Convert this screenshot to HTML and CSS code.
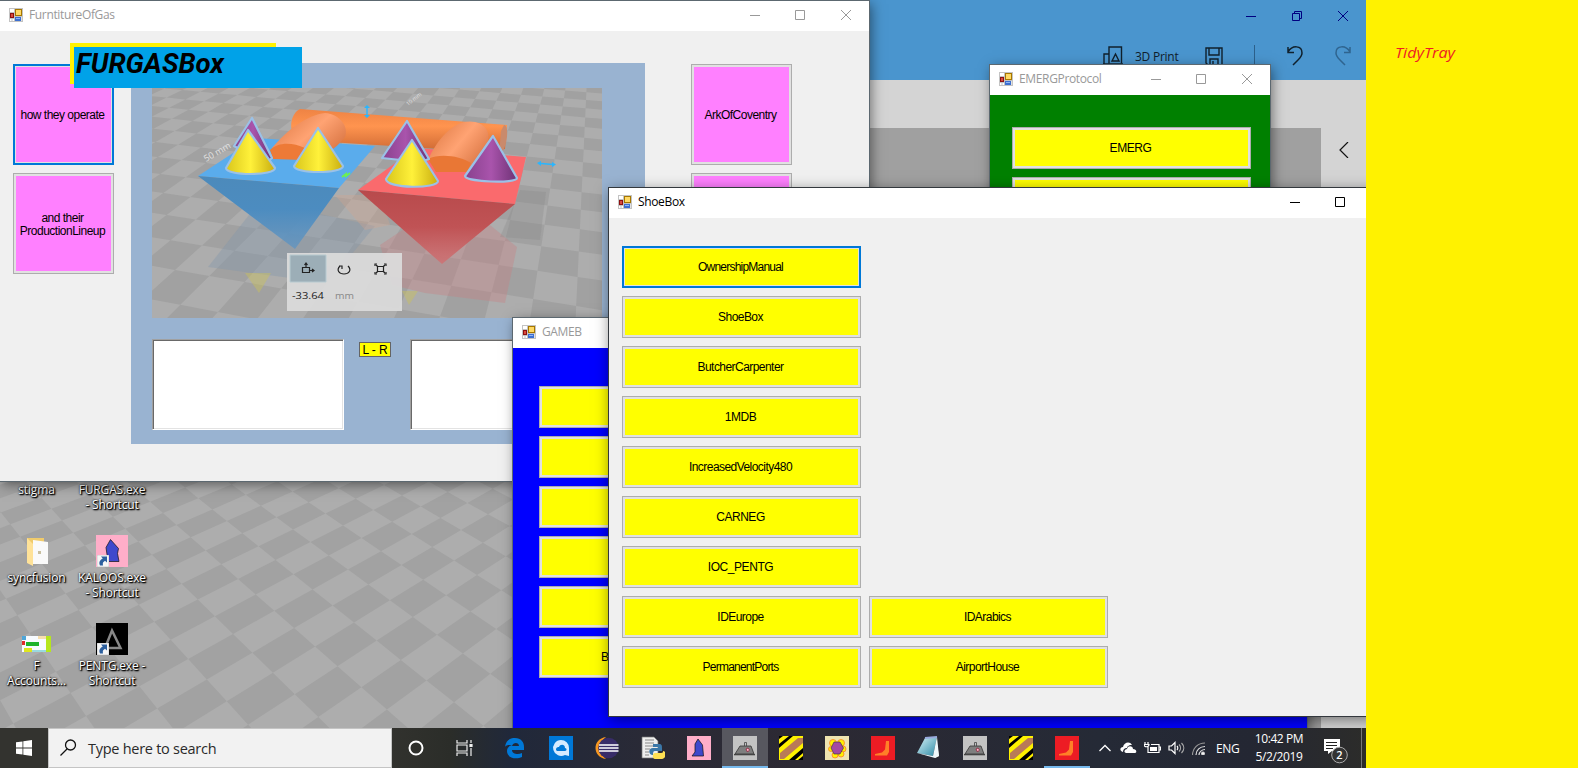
FILE: index.html
```html
<!DOCTYPE html>
<html lang="en">
<head>
<meta charset="utf-8">
<title>Desktop</title>
<link rel="stylesheet" href="styles.css">
</head>
<body>
<svg class="defs" width="0" height="0">
  <defs>
    <linearGradient id="gy" x2="1"><stop offset="0" stop-color="#d9c61c"/><stop offset=".5" stop-color="#fff13a"/><stop offset="1" stop-color="#c9ae10"/></linearGradient>
    <linearGradient id="gp" x2="1"><stop offset="0" stop-color="#88418d"/><stop offset=".5" stop-color="#a954ac"/><stop offset="1" stop-color="#6e3275"/></linearGradient>
    <linearGradient id="go" x1="0" y1="0" x2="0" y2="1"><stop offset="0" stop-color="#ee8344"/><stop offset=".4" stop-color="#ff944f"/><stop offset="1" stop-color="#cc6833"/></linearGradient>
    <linearGradient id="go2" x1="0" y1="0" x2="1" y2=".7"><stop offset="0" stop-color="#d9733d"/><stop offset=".55" stop-color="#ffa373"/><stop offset="1" stop-color="#d87442"/></linearGradient>
    <linearGradient id="gb" x2="0" y2="1"><stop offset="0" stop-color="#4c8abb"/><stop offset=".45" stop-color="#4c8cc0"/><stop offset="1" stop-color="#5f94c2" stop-opacity=".75"/></linearGradient>
    <linearGradient id="gr" x2="0" y2="1"><stop offset="0" stop-color="#b84a4c"/><stop offset=".5" stop-color="#c05355"/><stop offset="1" stop-color="#cf7274" stop-opacity=".85"/></linearGradient>
    <linearGradient id="note" x2="1" y2="1"><stop offset="0" stop-color="#d9f3f8"/><stop offset="1" stop-color="#2c8ba6"/></linearGradient>
    <symbol id="form" viewBox="0 0 14 14">
      <path fill="#c3c3c3" d="M0 0h14v14H0z"/><path fill="#fff" d="M1 1h4v3H1zM1 11h1.500v2H1zM3.500 11H5v2H3.500zM12.500 9H13v4h-.5z"/>
      <path fill="#8d1010" d="M1 5h4v5H1z"/><path fill="#d94a3c" d="M2 6h2v3H2z"/>
      <path fill="#a67700" d="M6 1h7v7H6z"/><path fill="#ffd964" d="M7 2h5v5H7z"/>
      <path fill="#3c6fd1" d="M6 9h6v4H6z"/><path fill="#91b5f5" d="M7 10h4v1H7z"/>
    </symbol>
    <symbol id="min" viewBox="0 0 10 10"><path d="M0 5.500h10" stroke="currentColor"/></symbol>
    <symbol id="max" viewBox="0 0 10 10"><path d="M.5.5h9v9h-9z" fill="none" stroke="currentColor"/></symbol>
    <symbol id="close" viewBox="0 0 10 10"><path d="M0 0l10 10M10 0L0 10" stroke="currentColor"/></symbol>
    <symbol id="stripes" viewBox="0 0 24 24"><path fill="#fff200" d="M0 0h24v24H0z"/><path fill="#000" d="M0 8L10 0h4L0 12zM0 0h4L0 3zM24 12v5l-8 7h-6zM24 20v4h-5z"/><path fill="#b97a57" d="M19 2h5v5L5 23H1v-6z"/></symbol>
    <symbol id="truck" viewBox="0 0 24 24"><path fill="#c3c3c3" d="M0 0h24v24H0z"/><path fill="#7f7f7f" stroke="#333" stroke-width=".8" d="M2 18l5-8h11l3 8z"/><path fill="none" stroke="#444" stroke-width=".8" d="M11.500 10V6.500h2V10"/><path fill="#444" d="M1 18h21v1.300H1z"/><path fill="#ffc0d0" stroke="#8c1a35" stroke-width=".8" d="M13 13l2-1 1.500 2-2 2z"/></symbol>
    <symbol id="shoe" viewBox="0 0 24 24"><path fill="#ed1c24" d="M0 0h24v24H0z"/><path fill="#ff7f27" d="M15 5h3v11l-2 3.500H4V18l7-1.500 3-3z"/></symbol>
    <symbol id="kaloos" viewBox="0 0 24 24"><path fill="#ffaec9" d="M0 0h24v24H0z"/><path fill="#3f48cc" stroke="#111" stroke-width=".7" d="M11 3l4.500 6 1 11H5l3-4V8z"/></symbol>
    <symbol id="arrow" viewBox="0 0 12 12"><path fill="#f6f6f6" stroke="#aaa" stroke-width=".5" d="M0 0h12v12H0z"/><path fill="#2c5f9e" d="M4 1.500h6v6L8 5.800C6 7 5.500 8 6 10.500H3C1.500 7 3 5 5.800 3.500z"/></symbol>
  </defs>
</svg>

<main class="desktop">
  <svg class="floor" width="520" height="260" viewBox="0 470 520 260"><path id="desk-tiles" fill="#a2a2a2"/></svg>

  <section class="icons">
    <figure><i></i><figcaption>stigma</figcaption></figure>
    <figure><i></i><figcaption>FURGAS.exe<br>- Shortcut</figcaption></figure>
    <figure><i><svg width="32" height="32"><path fill="#f0cb6c" d="M6 3h17v25H12L6 25z"/><path fill="#fafafa" d="M12 5l15 2v22H12z"/><path fill="#ffe298" d="M6 3l6 6v22l-6-3z"/><path fill="#c8bf9f" d="M17 16h3v3h-3z"/></svg></i><figcaption>syncfusion</figcaption></figure>
    <figure><i><svg width="32" height="32"><path fill="#ffaec9" d="M0 0h32v32H0z"/><path fill="#3f48cc" stroke="#111" stroke-width=".7" d="M14.500 4.500l8 9-1 5 1.500 8H12l-1-7-1-7z"/><use href="#arrow" x="1" y="20" width="12" height="12"/></svg></i><figcaption>KALOOS.exe<br>- Shortcut</figcaption></figure>
    <figure><i><svg width="32" height="32"><path fill="#f7fbff" d="M1 13h29v16H1z"/><path fill="#b5e61d" d="M25 13h5v16h-5z"/><path fill="#f7dfae" d="M17 13h8v3h-8z"/><path fill="#1db32b" d="M5 19h13v4H5z"/><path fill="#e02b2b" d="M1 18h3v4H1z"/><path fill="#4fa6d8" d="M1 13h4v4H1z"/><path fill="#dfe61d" d="M3 25h8v4H3z"/><path fill="#9ad9df" d="M11 27h14v2H11z"/></svg></i><figcaption>F<br>Accounts...</figcaption></figure>
    <figure><i><svg width="32" height="32"><path d="M0 0h32v32H0z"/><path fill="none" stroke="#888" stroke-width="2.500" d="M16 7.500L24.500 25H9z"/><use href="#arrow" x="1" y="20" width="12" height="12"/></svg></i><figcaption>PENTG.exe -<br>Shortcut</figcaption></figure>
  </section>

  <section class="paint">
    <header>
      <div class="caption"><svg width="10" height="10"><use href="#min"/></svg><svg width="10" height="10" fill="none" stroke="currentColor"><path d="M.5 2.500h7v7h-7zM2.500 2.500v-2h7v7h-2"/></svg><svg width="10" height="10"><use href="#close"/></svg></div>
      <div class="tools">
        <svg width="20" height="20" fill="none" stroke="#10202c" stroke-width="1.400"><path d="M6 17.500V1h12.500v16.500M6 8H1v10M9 15l3.500-7 3.500 7z"/><path d="M0 18h20"/></svg>
        <span>3D Print</span>
        <svg width="18" height="19" fill="none" stroke="#10202c" stroke-width="1.400"><path d="M1 1h16v17H3l-2-2zM4 1v7h10V1M5 18v-6h8v6M8 14v4"/></svg>
        <b></b>
        <svg width="18" height="21" fill="none" stroke="#10202c" stroke-width="1.500"><path d="M2 2v5.500h6M2 7C6 0 16 0 16 8c0 3-2 5-4 7l-5 5"/></svg>
        <svg width="18" height="21" fill="none" stroke="#2f648f" stroke-width="1.500"><path d="M16 2v5.500h-6M16 7C12 0 2 0 2 8c0 3 2 5 4 7l5 5"/></svg>
      </div>
    </header>
    <div class="work"><div class="canvas"></div><svg width="10" height="16" fill="none" stroke="#111" stroke-width="1.200"><path d="M9 0L1 8l8 8"/></svg></div>
  </section>

  <section class="window furn">
    <header class="bar"><svg width="14" height="14"><use href="#form"/></svg><h1>FurntitureOfGas</h1><div class="caption"><svg width="10" height="10"><use href="#min"/></svg><svg width="10" height="10"><use href="#max"/></svg><svg width="10" height="10"><use href="#close"/></svg></div></header>
    <div class="content">
      <div class="col"><button class="btn pink focus">how they operate</button><button class="btn pink">and their<br>ProductionLineup</button></div>
      <div class="panel">
        <svg class="scene" width="450" height="230" viewBox="152 88 450 230">
          <path fill="#adadad" d="M152 88h450v230H152z"/><path id="scene-tiles" fill="#a1a1a1"/>
          <path fill="#7e95ad" opacity=".35" d="M208 267l52-66 115 25-42 51-35 2z"/>
          <path fill="#dba58c" opacity=".3" d="M335 195l45 0 10 30-25 5z"/>
          <path fill="#c98083" opacity=".38" d="M380 245l30-20h80l27 22-12 56-80-10-33-8z"/>
          <path fill="#888" opacity=".3" d="M520 190l26 2-6 48-40-3z"/>
          <path fill="#c9c25a" opacity=".45" d="M245 273h26l-12 20zM402 291h16l-9 14z"/>
          <path fill="#5aacec" d="M198 176l58-38 119 8-36 42z"/><path fill="url(#gb)" d="M198 176l141 12-44 61z"/>
          <path fill="#fa6a6d" d="M358 190l58-42 110 9-11 47z"/><path fill="url(#gr)" d="M358 190l157 14-73 60z"/>
          <path fill="url(#go)" d="M300 109l207 16-2 24-18 3-190-12c-10-10-6-27 3-31z"/>
          <path fill="#c98a6c" d="M504 125c6 0 3 26-5 30l2-24z"/>
          <path fill="url(#go2)" d="M272 148c15-18 35-33 53-35 15 1 24 14 20 24-10 13-22 20-41 23z"/><path fill="#ed7a37" d="M270 150c8-8 22-8 35-2l-2 12-30-1z"/>
          <path fill="url(#go2)" d="M428 160c10-23 28-42 47-38 13 3 17 14 10 26l-14 24z"/><path fill="#e97735" d="M428 159c12-6 32-3 43 4l-4 9-31 0z"/>
          <g stroke="#9bc1e7" stroke-width="2.200" stroke-linejoin="round">
            <path fill="url(#gp)" d="M252 118l20 40-7 6-31-18z"/><path fill="url(#gp)" d="M407 121l22 38-10 3-37-4z"/>
            <path fill="url(#gy)" d="M248 130l27 38c0 8-49 8-49 0z"/><path fill="url(#gy)" d="M318 128l25 38c0 8-49 8-49 0z"/>
            <path fill="url(#gy)" d="M412 140l26 41c0 8-52 8-52-2z"/><path fill="url(#gp)" d="M493 136l24 42c0 6-52 4-52-2z"/>
          </g>
          <g stroke="#29b6ff" stroke-width="1.400" fill="#29b6ff"><path d="M367 107v9"/><path stroke="none" d="M364 108l3-3 3 3zM364 115l3 3 3-3z"/><path d="M541 163.500l12 1"/><path stroke="none" d="M541 161v5l-4-3zM552 162v5l4-2.500z"/></g>
          <path stroke="#6df050" stroke-width="2" fill="none" d="M342 177l4-3 0 2 4-3"/>
          <text class="dim" transform="translate(206 162) rotate(-30) scale(.9)">50 mm</text><text class="dim" transform="translate(408 106) rotate(-38) scale(.55)">10 mm</text>
          <path fill="#dcdcdc" opacity=".93" d="M287 253h115v58H287z"/><path fill="#9caeb7" stroke="#b8cbd1" d="M290 255h36v27h-36z"/>
          <g fill="none" stroke="#222" stroke-width="1.200"><path d="M302.500 267.500h7v5h-7zM306 267v-4M304.500 265l1.500-2 1.500 2M310 270.500h4M312 269l2 1.500-2 1.500M340 266c-4 4-1 8 4 8s8-4 4-8M339 266h3v3M376 265l9 8M376 273l9-8"/><path fill="#dcdcdc" d="M377.500 266.500h6v5h-6z"/><path d="M375 266v-2h2M384 264h2v2M375 272v2h2M384 274h2v-2"/></g>
          <text class="num" x="292" y="299" textLength="32" lengthAdjust="spacingAndGlyphs">-33.64</text><text class="num unit" x="335" y="299" textLength="19" lengthAdjust="spacingAndGlyphs">mm</text>
        </svg>
        <div class="fields"><div class="box"></div><span class="lr">L - R</span><div class="box"></div></div>
      </div>
      <div class="col right"><button class="btn pink">ArkOfCoventry</button><button class="btn pink"></button></div>
    </div>
    <div class="logo-back"></div>
    <div class="logo"><svg width="228" height="41"><text x="2" y="26" textLength="148" lengthAdjust="spacingAndGlyphs">FURGASBox</text></svg></div>
  </section>

  <section class="window gameb">
    <header class="bar"><svg width="14" height="14"><use href="#form"/></svg><h1>GAMEB</h1></header>
    <div class="stack"><button class="btn"></button><button class="btn"></button><button class="btn"></button><button class="btn"></button><button class="btn"></button><button class="btn cut">Br</button></div>
  </section>

  <section class="window emerg">
    <header class="bar"><svg width="14" height="14"><use href="#form"/></svg><h1>EMERGProtocol</h1><div class="caption"><svg width="10" height="10"><use href="#min"/></svg><svg width="10" height="10"><use href="#max"/></svg><svg width="10" height="10"><use href="#close"/></svg></div></header>
    <div class="stack"><button class="btn caps">EMERG</button><button class="btn"></button></div>
  </section>

  <section class="window shoebox">
    <header class="bar"><svg width="14" height="14"><use href="#form"/></svg><h1>ShoeBox</h1><div class="caption"><svg width="10" height="10"><use href="#min"/></svg><svg width="10" height="10"><use href="#max"/></svg></div></header>
    <div class="grid">
      <button class="btn focus tight">OwnershipManual</button>
      <button class="btn">ShoeBox</button>
      <button class="btn">ButcherCarpenter</button>
      <button class="btn caps">1MDB</button>
      <button class="btn">IncreasedVelocity480</button>
      <button class="btn caps">CARNEG</button>
      <button class="btn caps">IOC_PENTG</button>
      <button class="btn">IDEurope</button><button class="btn second">IDArabics</button>
      <button class="btn tight">PermanentPorts</button><button class="btn second">AirportHouse</button>
    </div>
  </section>

  <footer class="taskbar">
    <div class="start"><svg width="16" height="16" fill="#fff"><path d="M0 2.300l6.500-.9v6.200H0zM7.300 1.300L16 0v7.600H7.300zM0 8.400h6.500v6.200L0 13.700zM7.300 8.400H16V16l-8.700-1.300z"/></svg></div>
    <div class="search"><svg width="17" height="17" fill="none" stroke="#111" stroke-width="1.300"><circle cx="10.500" cy="6" r="5"/><path d="M7 10l-6.500 6.500"/></svg><span>Type here to search</span></div>
    <div class="apps">
      <a class="app sys"><svg width="16" height="16"><circle cx="8" cy="8" r="6.500" fill="none" stroke="#fff" stroke-width="2"/></svg></a>
      <a class="app sys2"><svg width="17" height="16" fill="none" stroke="#eee" stroke-width="1.200"><path d="M1 0v3h10V0M1 5h10v6H1zM1 16v-3h10v3M15 0v3M15 8v8"/><path fill="#fff" d="M14 4.500h2v2h-2z"/></svg></a>
      <a class="app"><svg width="24" height="24"><path fill="#0078d7" d="M2 11C3 4 7 2 12 2c6 0 9 4 9 9v3H9c0 4 6 5 10 3v4c-6 3-15 1-15-6 0-3 2-5 5-6-4 0-6 0-7 2zm7-1h7c0-4-6-4-7 0z"/></svg></a>
      <a class="app"><svg width="24" height="24"><path fill="#0078d7" d="M0 0h24v24H0z"/><path fill="#d5ebff" d="M12 4a8 8 0 1 0 4 15l4 1V12a8 8 0 0 0-8-8z"/><path fill="#0078d7" d="M7 14c0-3 2-3 3-3 1-3 6-3 6 1 2 0 2 3 0 3H8z"/></svg></a>
      <a class="app"><svg width="24" height="24"><path fill="#f89820" d="M11 1C-3 3-3 21 11 23 4 18 4 6 11 1z"/><circle cx="13.500" cy="12" r="10.300" fill="#382c68"/><path stroke="#fff" stroke-width="1.600" d="M4 9h19.500M4 12h19.500M4 15h19.500"/></svg></a>
      <a class="app"><svg width="24" height="24"><path fill="#eee" stroke="#777" stroke-width=".7" d="M1 1h12l4 4v17H1z"/><path stroke="#888" d="M4 4h9M4 7h9M4 10h8M4 13h5M4 16h4M4 19h4"/><path fill="#3b77a8" d="M12 8h6c3 0 3 2 3 4v3h-7c-2 0-2 2-2 4-5 0-5-7 0-7h5v-1h-5z"/><path fill="#ffe052" d="M22 15c4 0 3 8-1 8h-7c-3 0-3-6 0-6h6c2 0 2-1 2-2z"/></svg></a>
      <a class="app"><svg width="24" height="24"><use href="#kaloos"/></svg></a>
      <a class="app active"><svg width="24" height="24"><use href="#truck"/></svg></a>
      <a class="app"><svg width="24" height="24"><use href="#stripes"/></svg></a>
      <a class="app"><svg width="24" height="24"><path fill="#efe4b0" d="M0 0h24v24H0z"/><g fill="#fff200" stroke="#ff7f27" stroke-width=".8"><circle cx="8" cy="7" r="3.500"/><circle cx="16" cy="7" r="3.500"/><circle cx="18" cy="13" r="3"/><circle cx="16" cy="18" r="3"/><circle cx="10" cy="19" r="3"/><circle cx="6" cy="13" r="2.500"/></g><path fill="#a349a4" stroke="#333" stroke-width=".6" d="M9 6h6l3.500 6-3.500 6H9l-3-6z"/></svg></a>
      <a class="app"><svg width="24" height="24"><use href="#shoe"/></svg></a>
      <a class="app"><svg width="24" height="24"><path fill="#e3d6b5" d="M19 2l3 18-4 2z"/><path fill="url(#note)" d="M8 2l12-1-4 19-16-3z"/><path fill="#eef8fb" d="M0 17l16 3 4-19 2 19-4 2z"/><path stroke="#9ad" d="M8 2l12-1" stroke-width="2"/></svg></a>
      <a class="app"><svg width="24" height="24"><use href="#truck"/></svg></a>
      <a class="app"><svg width="24" height="24"><use href="#stripes"/></svg></a>
      <a class="app open"><svg width="24" height="24"><use href="#shoe"/></svg></a>
    </div>
    <div class="tray">
      <svg width="12" height="8" fill="none" stroke="#fff" stroke-width="1.300"><path d="M.5 7L6 1.500 11.500 7"/></svg>
      <svg width="17" height="12" fill="#fff"><path d="M3 10C-1 9 0 5 3 5c1-5 7-6 9-2-4 0-5 2-5 3-3 0-4 2-4 4z"/><path d="M6 11c-3-1-1-4 1-4 1-4 6-3 6 0 4 0 4 4 2 4z"/></svg>
      <svg width="17" height="12" fill="none" stroke="#fff" stroke-width="1.200"><path d="M4 5v5.500h11v-8H7M15 5h1.500v3H15M1 0v2M4 0v2M0 2.500h5c0 3-5 3-5 0"/><path fill="#fff" stroke="none" d="M6 5h7v4H6z"/></svg>
      <svg width="17" height="14" fill="none" stroke="#fff" stroke-width="1.200"><path d="M1 5h2.500L7 1.500v11L3.500 9H1zM9 5c1 1 1 3 0 4"/><path stroke="#aaa" d="M11 3.500c2 2 2 5 0 7M13.500 2c3 3 3 7 0 10"/></svg>
      <svg width="13" height="13" fill="none" stroke="#ddd" stroke-width="1.200"><path stroke="#999" d="M.5 13C.5 6 6 1 13 1"/><path d="M4 13c0-5 4-8.500 9-8.500M7 13c0-3 3-5.500 6-5.500"/><circle cx="11" cy="11.500" r="1.300" fill="#fff"/></svg>
      <span class="lang">ENG</span>
      <span class="clock">10:42 PM<br>5/2/2019</span>
      <svg class="note" width="26" height="26"><path fill="#fff" d="M1 1h16v12H9l-4 3v-3H1z"/><path stroke="#222" d="M3 4.500h11M3 7.500h11M3 10.500h7"/><circle cx="16.500" cy="17" r="7.800" fill="#333" stroke="#aaa"/><text x="13.300" y="21">2</text></svg>
    </div>
    <b class="peek"></b>
  </footer>
</main>
<aside class="tidy"><svg width="100" height="30"><text x="0" y="20" textLength="60" lengthAdjust="spacingAndGlyphs">TidyTray</text></svg></aside>
<script src="floor.js"></script>
</body>
</html>
```
FILE: styles.css
```css
* { box-sizing: border-box; }
body { margin: 0; width: 1578px; height: 768px; overflow: hidden; display: flex; background: #fff200; font-family: "Open Sans", "Noto Sans", sans-serif; }
svg { display: block; flex: none; }
.defs { position: absolute; }
.desktop { position: relative; width: 1366px; height: 768px; overflow: hidden; background: #adadad; flex: none; }
.floor { position: absolute; left: 0; top: 470px; }
.icons { position: absolute; left: 0; top: 444px; display: grid; grid-template-columns: 73px 78px; grid-auto-rows: 88px; }
.icons figure { margin: 0; display: flex; flex-direction: column; align-items: center; }
.icons i { height: 38px; padding-top: 3px; }
.icons figcaption { font-size: 12px; line-height: 15px; letter-spacing: -.15px; text-align: center; color: #fff; text-shadow: 1px 1px 2px #000, 1px 1px 1px #000, 0 0 2px #000; white-space: nowrap; }

.paint { position: absolute; left: 869px; top: 0; width: 497px; height: 728px; background: #d4d4d4; display: flex; flex-direction: column; }
.paint header { height: 80px; background: #4a95ce; flex: none; }
.paint .caption { color: #000080; height: 32px; padding-right: 18px; }
.paint .tools { display: flex; align-items: center; padding: 0 5px 0 234px; height: 48px; font-size: 12px; color: #10202c; }
.tools span { margin: 0 26px 0 12px; width: 44px; white-space: nowrap; letter-spacing: -.25px; }
.tools b { width: 1px; height: 22px; background: #2c608b; margin: 0 31px 0 31px; }
.tools svg:nth-last-child(-n+2) { margin-bottom: 2px; }
.tools svg:last-child { margin-left: 30px; }
.work { flex: 1; display: flex; padding-top: 48px; }
.canvas { width: 452px; margin-right: 17px; background: #a0a0a0; }
.work svg { margin-top: 14px; margin-left: 1px; }

.caption { display: flex; align-items: center; justify-content: flex-end; gap: 36px; margin-left: auto; }
.caption svg:first-child { margin-right: -1px; }
.paint .caption svg:first-child { margin-right: 0; }
.window { position: absolute; background: #f0f0f0; box-shadow: 0 0 0 1px #5c6870, 2px 3px 12px rgba(0,0,0,.5); }
.bar { height: 30px; background: #fff; display: flex; align-items: center; padding: 0 18px 2px 9px; color: #999; }
.bar h1 { font-size: 12px; line-height: 16px; font-weight: 400; margin: 0 0 0 6px; letter-spacing: -.35px; }
.btn { width: 239px; height: 42px; padding: 0 2px 0 0; border: 1px solid #adadad; box-shadow: inset 0 0 0 2px #e1e1e1; background: #ff0; color: #000; font: 12px/13px "Liberation Sans", Arial, sans-serif; letter-spacing: -.55px; text-align: center; display: block; border-radius: 0; }
.btn.caps { letter-spacing: -.45px; }
.btn.tight { letter-spacing: -.78px; }
.btn.pink { width: 101px; height: 101px; padding: 2px 2px 0 0; letter-spacing: -.5px; background: #ff80ff; }
.btn.focus { border: 2px solid #0078d7; box-shadow: inset 0 0 0 1px #e1e1e1; }

.furn { left: 0; top: 1px; width: 869px; height: 480px; }
.furn .content { display: flex; padding: 32px 0 0 13px; }
.col { display: flex; flex-direction: column; gap: 8px; padding-top: 1px; margin-right: 17px; }
.col.right { margin: 0 0 0 46px; }
.panel { width: 514px; height: 381px; background: #99b3d1; padding: 25px 21px 0; overflow: hidden; }
.dim { font-size: 10px; fill: #e2e2e2; }
.num { font-size: 9px; fill: #222; }
.unit { fill: #888; }
.fields { display: flex; align-items: flex-start; margin-top: 21px; }
.box { flex: none; width: 192px; height: 91px; background: #fff; border: 1px solid; border-color: #a0a0a0 #fff #fff #a0a0a0; box-shadow: inset 1px 1px #696969, inset -1px -1px #e3e3e3; }
.lr { flex: none; width: 32px; height: 15px; margin: 3px 19px 0 15px; background: #ff0; border: 1px solid #646464; font: 12px/14px "Liberation Sans", sans-serif; letter-spacing: -.1px; text-align: center; }
.logo-back { position: absolute; left: 70px; top: 42px; width: 206px; height: 41px; background: #fff200; }
.logo { position: absolute; left: 74px; top: 46px; width: 228px; height: 41px; background: #00a2e8; }
.logo text { font: italic 700 27px Roboto, sans-serif; }

.gameb { left: 513px; top: 318px; width: 794px; height: 420px; background: #00f; }
.gameb .stack, .emerg .stack { display: flex; flex-direction: column; gap: 8px; }
.gameb .stack { padding: 38px 0 0 26px; }
.btn.cut { text-align: left; padding-left: 61px; }
.emerg { left: 990px; top: 65px; width: 280px; height: 200px; background: #008000; }
.emerg .stack { padding: 32px 0 0 22px; }
.shoebox { left: 609px; top: 188px; width: 771px; height: 528px; box-shadow: 0 0 0 1px #33383d, 1px 3px 14px rgba(0,0,0,.5); }
.shoebox .bar { color: #000; padding-right: 35px; }
.shoebox .caption svg:first-child { margin-right: -1px; }
.shoebox .grid { display: grid; grid-template-columns: 239px 239px; gap: 8px; padding: 28px 0 0 13px; }
.grid .btn { grid-column: 1; }
.grid .second { grid-column: 2; }

.taskbar { position: absolute; left: 0; top: 728px; width: 1366px; height: 40px; display: flex; background: linear-gradient(90deg, #33332f 0, #33332f 380px, #2b2d29 450px, #20283a 510px, #2a2a36 650px, #2c2933 800px, #252a36 1100px, #242733 1250px, #2c2c2a 1366px); }
.start { width: 48px; padding: 12px 16px; }
.search { width: 344px; background: #f2f2f2; border: 1px solid #c4c4c4; display: flex; align-items: center; font-size: 14.500px; letter-spacing: -.27px; color: #2a2a2a; padding: 0 0 2px 11px; }
.search span { margin: 2px 0 0 11px; }
.apps { display: flex; }
.app { width: 46px; height: 40px; display: flex; align-items: center; justify-content: center; }
.app.sys { width: 48px; }
.app.sys2 { width: 52px; padding-right: 4px; }
.app.active { background: #57575f; border-bottom: 2px solid #76b9ed; padding-top: 2px; }
.app.open { border-bottom: 2px solid #76b9ed; padding-top: 2px; }
.tray { display: flex; align-items: center; color: #fff; margin-left: 4px; }
.tray svg { margin-right: 7px; }
.tray svg:first-child { margin-right: 9px; margin-left: 5px; }
.lang { font-size: 12px; letter-spacing: -.3px; margin-left: 4px; width: 35px; }
.clock { font-size: 12px; line-height: 18px; letter-spacing: -.4px; width: 56px; text-align: center; white-space: nowrap; }
.tray .note { margin: 6px 0 0 16px; }
.note text { font-size: 11px; fill: #fff; font-weight: 600; }
.peek { width: 1px; background: #777; position: absolute; right: 4px; top: 0; height: 40px; }
.tidy { padding: 38px 0 0 29px; }
.tidy text { font: italic 14px "Open Sans", sans-serif; fill: #ed1c24; }
```
FILE: floor.js
```js
// Builds a checkerboard in perspective. A lattice point is the weighted mean of
// the origin and the two vanishing points.
function tiles(id, o, p, a, q, b, us, vs, odd) {
  function at(u, v) {
    var w = 1 + u * a + v * b;
    if (w < 0.2) return null;
    return ((o[0] + u * a * p[0] + v * b * q[0]) / w).toFixed(1) + ' ' +
           ((o[1] + u * a * p[1] + v * b * q[1]) / w).toFixed(1);
  }
  var d = '';
  for (var u = us[0]; u < us[1]; u++) {
    for (var v = vs[0]; v < vs[1]; v++) {
      if (((u + v) & 1) !== odd) continue;
      var c = [at(u, v), at(u + 1, v), at(u + 1, v + 1), at(u, v + 1)];
      if (c.indexOf(null) < 0) d += 'M' + c.join('L') + 'Z';
    }
  }
  document.getElementById(id).setAttribute('d', d);
}
tiles('desk-tiles', [252.3, 652.7], [1291.7, 42], 0.0419, [-375.7, 40], -0.0317, [-12, 22], [-22, 12], 0);
tiles('scene-tiles', [586, 100], [-2000, -111], 0.0086, [596, -111], 0.038, [-4, 70], [-35, 6], 0);
```
